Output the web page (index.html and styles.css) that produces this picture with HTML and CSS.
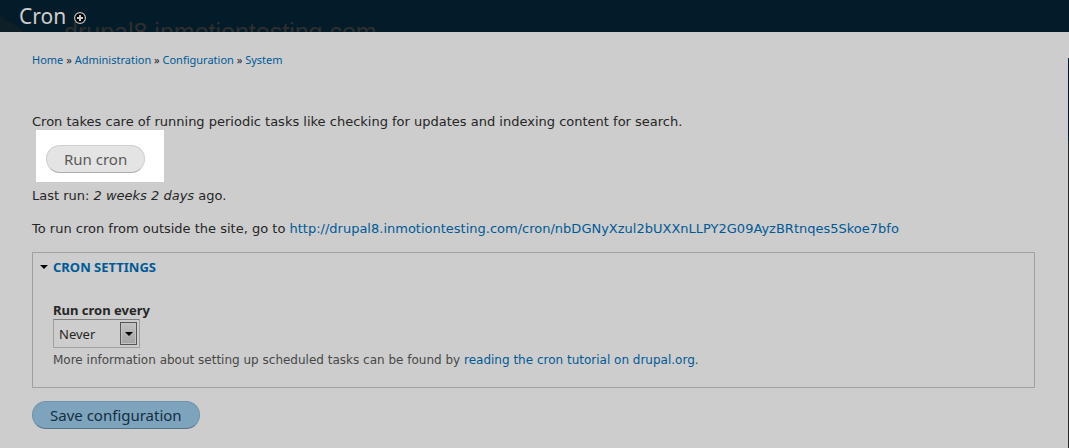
FILE: index.html
```html
<!DOCTYPE html>
<html lang="en">
<head>
<meta charset="utf-8">
<title>Cron</title>
<link rel="stylesheet" href="styles.css">
</head>
<body>
<header class="topbar">
  <svg class="site-logo" viewBox="0 0 24 18" aria-hidden="true"><path d="M0 0C2 5 8 7 13 10C18 13 21 15 23 18H0Z" fill="#0f1f28"/></svg>
  <div class="site-name">drupal8.inmotiontesting.com</div>
  <div class="title-row">
    <h1 class="title">Cron</h1>
    <button class="add" type="button" aria-label="Add to shortcuts">
      <svg viewBox="0 0 12 12" width="12" height="12"><circle cx="6" cy="6" r="5.4" fill="#000" stroke="#c4c4c4" stroke-width="1.2"/><path d="M6 3V9M3 6H9" stroke="#cdcdcd" stroke-width="2"/></svg>
    </button>
  </div>
</header>
<div class="page">
  <main class="content">
    <nav class="breadcrumb" aria-label="Breadcrumb"><a href="#">Home</a> » <a href="#">Administration</a> » <a href="#">Configuration</a> » <a href="#">System</a></nav>
    <p class="text">Cron takes care of running periodic tasks like checking for updates and indexing content for search.</p>
    <div class="highlight"><button class="btn" type="button">Run cron</button></div>
    <p class="text last-run">Last run: <em>2 weeks 2 days</em> ago.</p>
    <p class="text outside">To run cron from outside the site, go to <a href="#">http://drupal8.inmotiontesting.com/cron/nbDGNyXzul2bUXXnLLPY2G09AyzBRtnqes5Skoe7bfo</a></p>
    <details class="settings" open>
      <summary class="legend"><svg width="8" height="4" viewBox="0 0 8 4" aria-hidden="true"><path d="M0 0H8L4 4Z"/></svg><span>CRON SETTINGS</span></summary>
      <div class="field">
        <label class="label" for="interval">Run cron every</label>
        <div class="select-wrap">
          <select class="select" id="interval"><option>Never</option></select>
          <span class="arrow"><svg width="8" height="4" viewBox="0 0 8 4" aria-hidden="true"><path d="M0 0H8L4 4Z"/></svg></span>
        </div>
        <p class="hint">More information about setting up scheduled tasks can be found by <a href="#">reading the cron tutorial on drupal.org</a>.</p>
      </div>
    </details>
    <button class="btn primary" type="submit">Save configuration</button>
  </main>
  <div class="edge"></div>
</div>
</body>
</html>
```
FILE: styles.css
```css
* { box-sizing: border-box; }
body {
  margin: 0;
  min-height: 100vh;
  display: flex;
  flex-direction: column;
  background: #cdcdcd;
  color: #262626;
  font: 13px/20px "DejaVu Sans", sans-serif;
}
a { color: #005a96; text-decoration: none; }
p { margin: 0; }
.topbar {
  position: relative;
  height: 32px;
  overflow: hidden;
  background: #041c29;
}
.site-logo { position: absolute; left: 0; bottom: 0; width: 24px; height: 18px; }
.site-name {
  position: absolute;
  left: 64px;
  top: 18px;
  color: #2f2f2f;
  font: 25px/28px "Liberation Sans", sans-serif;
}
.title-row {
  position: relative;
  display: flex;
  align-items: center;
  gap: 8px;
  height: 32px;
  padding-left: 19px;
}
.title { margin: 0; color: #cdcdcd; font: 400 21px/32px "Noto Sans", sans-serif; }
.add { display: flex; margin: 4px 0 0; padding: 0; border: 0; background: none; }
.page { flex: 1; display: flex; }
.content { flex: 1; padding: 18px 33px 18px 32px; }
.edge { width: 1px; margin-top: 26px; background: linear-gradient(#041c29 83px, #262626 83px); }
.breadcrumb { margin-bottom: 42px; font: 11px/20px "Noto Sans", sans-serif; }
.highlight { width: 128px; margin: -2px 0 0 4px; padding: 15px 10px 9px; background: #fff; }
.btn {
  display: block;
  height: 28px;
  padding: 0 17px;
  border: 1px solid #cfcfcf;
  border-bottom-color: #acacac;
  border-radius: 14px;
  background: #e4e4e4;
  color: #5a5a5a;
  font: 15px/26px "Noto Sans", sans-serif;
  white-space: nowrap;
}
.last-run { margin-top: 4px; }
.outside { margin-top: 13px; }
.settings { margin-top: 13px; padding: 4px 20px 17px 7px; border: 1px solid #a0a0a0; }
.legend { display: flex; align-items: center; gap: 5px; list-style: none; color: #005a96; font: 700 13px/20px "Noto Sans", sans-serif; }
.field { margin: 24px 0 0 13px; }
.label { display: block; font: 700 13px/18px "Noto Sans", sans-serif; }
.select-wrap { position: relative; width: 87px; }
.select {
  display: block;
  width: 100%;
  height: 29px;
  padding: 0 5px;
  appearance: none;
  border: 1px solid #a0a0a0;
  border-top-color: #7e7e7e;
  border-radius: 0;
  background: #cdcdcd;
  color: #262626;
  font: 13px/24px "Noto Sans", sans-serif;
}
.arrow {
  position: absolute;
  top: 3px;
  right: 3px;
  display: flex;
  align-items: center;
  justify-content: center;
  width: 17px;
  height: 23px;
  border: 1px solid #555;
  background: linear-gradient(#c2c2c2, #a4a4a4);
  box-shadow: inset 0 0 0 1px #c4c4c4;
  pointer-events: none;
}
.hint { margin-top: 2px; color: #484848; font-size: 12px; }
.primary {
  margin-top: 13px;
  border-color: #7094ab;
  border-bottom-color: #567387;
  background: #7ea3bc;
  color: #132f42;
}
```
